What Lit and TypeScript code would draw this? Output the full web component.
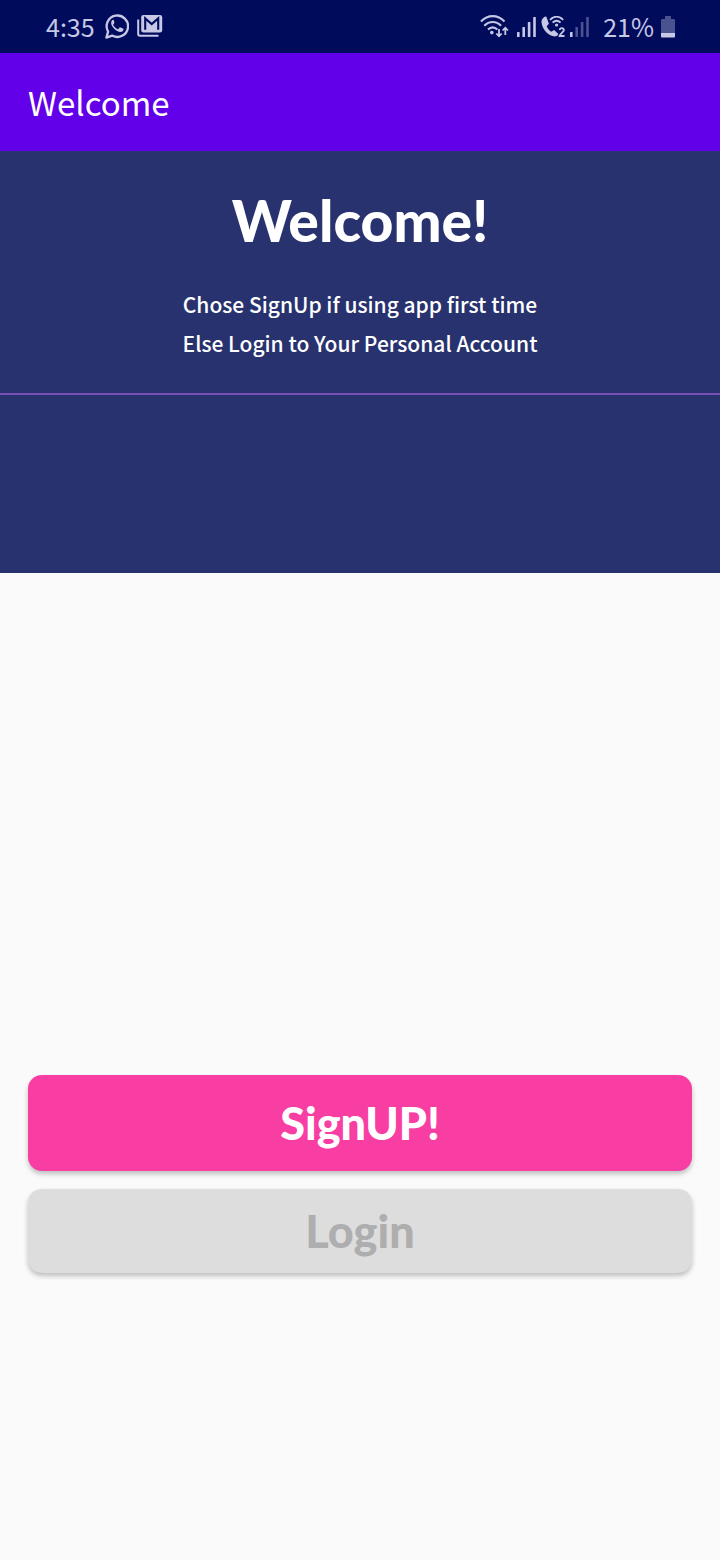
import { LitElement, html, css, svg } from "lit";
import { customElement, property } from "lit/decorators.js";

@customElement("signal-bars")
class SignalBars extends LitElement {
  @property({ type: Number }) level = 4;

  static styles = css`
    :host { display: block; height: 20px; }
    svg { display: block; fill: #c6c8e6; }
    .off { opacity: 0.38; }
  `;

  render() {
    const heights = [5, 10, 15, 20];
    return html`<svg width="19" height="20" viewBox="0 0 19 20" aria-hidden="true">
      ${heights.map(
        (h, i) => svg`<rect class=${i < this.level ? "on" : "off"} x=${i * 5.4} y=${20 - h} width="2.6" height=${h} rx=".6"/>`
      )}
    </svg>`;
  }
}

@customElement("status-bar")
class StatusBar extends LitElement {
  static styles = css`
    :host {
      display: flex;
      align-items: center;
      justify-content: space-between;
      height: 53px;
      padding: 0 45px 0 46px;
      background: #000b5c;
      color: #c6c8e6;
      font: 25px/36px "Noto Sans CJK SC", "Noto Sans", sans-serif;
    }
    .group { display: flex; align-items: center; }
    .left { gap: 10px; padding-bottom: 2px; }
    .left svg + svg { margin-left: -2px; }
    .right { gap: 5px; }
    .wifi { margin-right: 3px; }
    .percent { margin: 0 2px 0 9px; padding-bottom: 2px; }
    svg { display: block; }
  `;

  render() {
    return html`
      <div class="group left">
        <span>4:35</span>
        <svg width="24" height="26" viewBox="0 0 24 26" fill="none" aria-hidden="true">
          <path d="M1.4 24.6 3.1 18.6A10.7 10.7 0 1 1 7.2 22.6Z" stroke="#c6c8e6" stroke-width="2.3" stroke-linejoin="round"/>
          <path d="M8.3 6.8c-.8 0-2.2 1.2-2.2 3.3 0 2.1 1.6 4.2 3.1 5.7 1.7 1.7 4.2 3.2 6.3 3.2 1.9 0 3-1.5 3-2.6 0-.5-.2-.7-.5-.8l-2.5-1.2c-.5-.2-.8-.1-1.1.3l-1 1.2c-.3.3-.6.3-1 .1-1.9-.9-3.3-2.3-4.1-3.8-.2-.4-.1-.7.2-1l.7-.9c.2-.3.2-.6.1-.9L8.9 7.3c-.1-.3-.3-.5-.6-.5Z" fill="#c6c8e6"/>
        </svg>
        <svg width="26" height="22" viewBox="0 0 26 22" fill="none" aria-hidden="true">
          <path d="M1.2 4.5V19a1.8 1.8 0 0 0 1.8 1.8H21.5" stroke="#c6c8e6" stroke-width="2"/>
          <rect x="4.2" width="21" height="17.4" rx="2.2" fill="#c6c8e6"/>
          <path d="M8.2 14.8V3.4L14.7 9l6.500-5.600v11.400" stroke="#000b5c" stroke-width="2.1"/>
        </svg>
      </div>
      <div class="group right">
        <svg class="wifi" width="29" height="23" viewBox="0 0 29 23" fill="none" stroke="#c6c8e6" aria-hidden="true">
          <path d="M.9 6.5C8-.7 17.5-.7 24.5 6.5M4.3 10.7c5-5 11.8-5 16.8 0M8 14.5c3-2.8 6.4-2.8 9.4 0" stroke-width="2.1"/>
          <circle cx="11.8" cy="17.6" r="1.8" fill="#c6c8e6" stroke="none"/>
          <path d="M19 14v7.200M16.300 18.500l2.700 2.800 2.700-2.800M25.300 20v-7.300M22.600 15.500l2.700-2.800 2.700 2.800" stroke-width="1.8"/>
        </svg>
        <signal-bars level="4"></signal-bars>
        <svg width="24" height="22" viewBox="0 0 24 22" fill="none" aria-hidden="true">
          <path d="M3.7.8C1.8 1.8.3 3.7.5 6.2c.3 3.8 2.300 7.600 5 10.300 2.400 2.400 5.500 4 8.600 3.900 1.500 0 2.700-1 3.300-2.300l-4.300-4-2.800 1.700c-2-1.100-3.700-3-4.600-5.500l2.200-2.500L5.700 1.400C5.200.5 4.600.3 3.700.8Z" fill="#c6c8e6"/>
          <path d="M9 3.800C13-.2 18.200-.2 22.200 3.800M11.600 6.600c2.500-2.400 5.500-2.400 8 0" stroke="#c6c8e6" stroke-width="1.9"/>
          <circle cx="15.600" cy="9" r="1.600" fill="#c6c8e6"/>
          <path d="M18.700 14c.3-2.500 4.300-2.300 4.200.1 0 1.900-3.900 3.700-4.300 5.900h4.900" stroke="#c6c8e6" stroke-width="1.8"/>
        </svg>
        <signal-bars level="1"></signal-bars>
        <span class="percent">21%</span>
        <svg width="14" height="22" viewBox="0 0 14 22" fill="#c6c8e6" aria-hidden="true">
          <path d="M4 0h6v3h3a1 1 0 0 1 1 1v13H0V4a1 1 0 0 1 1-1h3Z" opacity=".38"/>
          <path d="M0 17h14v3.5a1 1 0 0 1-1 1H1a1 1 0 0 1-1-1Z"/>
        </svg>
      </div>
    `;
  }
}

@customElement("app-root")
class AppRoot extends LitElement {
  static styles = css`
    :host {
      display: flex;
      flex-direction: column;
      min-height: 100vh;
      background: #fafafa;
      color: #fff;
      font-family: "Noto Sans CJK SC", "Noto Sans", sans-serif;
    }
    .app-bar {
      display: flex;
      align-items: center;
      height: 98px;
      padding: 0 28px;
      background: #6200ea;
      font-size: 33px;
      line-height: 48px;
    }
    .hero {
      height: 422px;
      background: #28326e;
      text-align: center;
    }
    h1 {
      margin: 0;
      padding-top: 33px;
      font: 900 57px/72px Lato, sans-serif;
    }
    .intro {
      margin: 0;
      padding: 29px 0 30px;
      border-bottom: 2px solid #7750b5;
      font-size: 21px;
      font-weight: 500;
      line-height: 39px;
    }
    .intro span { display: block; }
    .actions {
      display: flex;
      flex-direction: column;
      gap: 18px;
      margin-top: auto;
      padding: 0 28px 287px;
    }
    button {
      height: 96px;
      padding: 0;
      border: 0;
      border-radius: 14px;
      background: #f83da3;
      color: #fff;
      box-shadow: 0 3px 5px rgba(0, 0, 0, 0.24);
      font: 900 45px/48px Lato, sans-serif;
    }
    .login {
      height: 84px;
      background: #ddd;
      color: #aeaeae;
    }
  `;

  render() {
    return html`
      <status-bar></status-bar>
      <header class="app-bar">Welcome</header>
      <section class="hero">
        <h1>Welcome!</h1>
        <p class="intro">
          <span>Chose SignUp if using app first time</span>
          <span>Else Login to Your Personal Account</span>
        </p>
      </section>
      <main class="actions">
        <button type="button">SignUP!</button>
        <button type="button" class="login">Login</button>
      </main>
    `;
  }
}
